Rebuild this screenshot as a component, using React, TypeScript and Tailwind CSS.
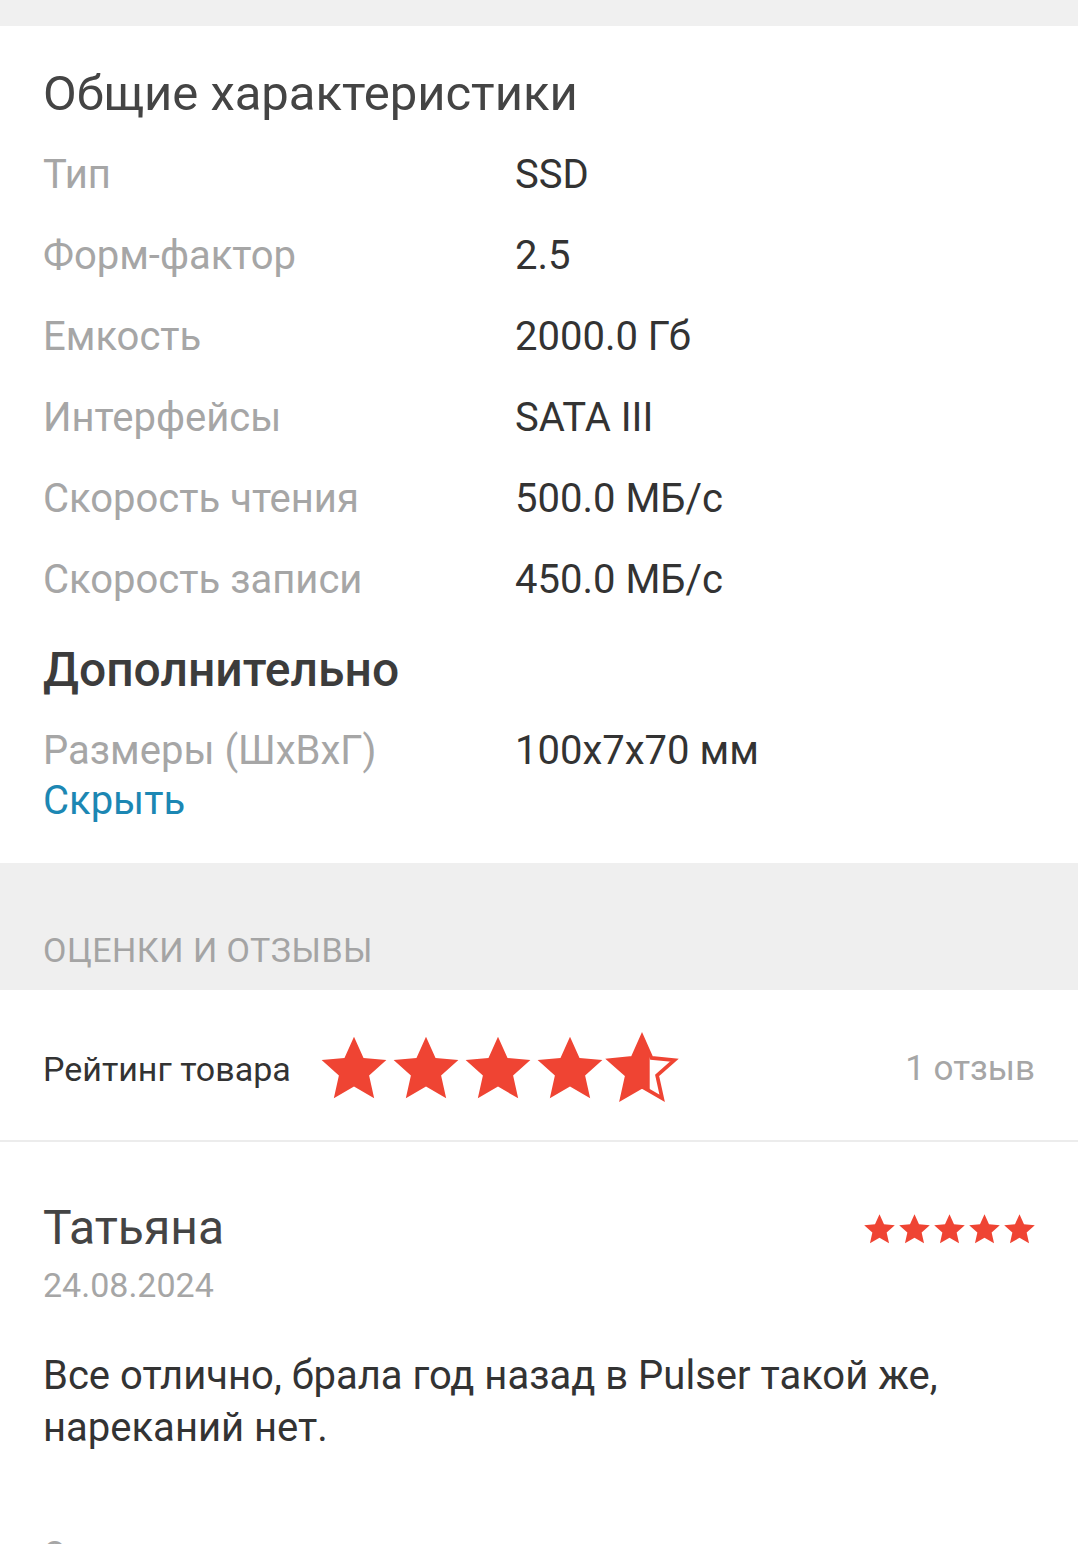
import { ThumbsUp } from "lucide-react"

const specs = [
  ["Тип", "SSD"],
  ["Форм-фактор", "2.5"],
  ["Емкость", "2000.0 Гб"],
  ["Интерфейсы", "SATA III"],
  ["Скорость чтения", "500.0 МБ/с"],
  ["Скорость записи", "450.0 МБ/с"],
]

const StarPath = "M12 1.5l3.09 6.9 7.41.72-5.6 4.98 1.64 7.4L12 17.7l-6.54 3.8 1.64-7.4-5.6-4.98 7.41-.72z"

const Star = ({ size, half = false }: { size: number; half?: boolean }) => (
  <svg width={size} height={size} viewBox="0 0 24 24">
    {half && (
      <defs>
        <clipPath id="half">
          <rect x="0" y="0" width="14.5" height="24" />
        </clipPath>
      </defs>
    )}
    {half ? (
      <>
        <path d={StarPath} fill="none" stroke="#ef4433" strokeWidth="1.2" />
        <path d={StarPath} fill="#ef4433" clipPath="url(#half)" />
      </>
    ) : (
      <path d={StarPath} fill="#ef4433" />
    )}
  </svg>
)

export default function App() {
  return (
    <div className="w-[1078px] h-[1544px] overflow-hidden bg-white font-['Roboto',sans-serif]">
      <div className="h-[26px] bg-[#f0f0f0]" />

      <div className="px-[43px] pt-[40px] pb-[37px]">
        <h2 className="text-[49px] leading-[56px] text-[#444] mb-[12px]">Общие характеристики</h2>
        <div className="flex flex-col">
          {specs.map(([k, v]) => (
            <div key={k} className="flex h-[81px] items-center text-[40px]">
              <div className="w-[472px] text-[#a6a6a6]">{k}</div>
              <div className="text-[#333]">{v}</div>
            </div>
          ))}
        </div>
        <h2 className="mt-[22px] text-[48px] leading-[56px] font-medium text-[#3c3c3c]">Дополнительно</h2>
        <div className="mt-[28px] flex text-[40px] leading-[50px]">
          <div className="w-[472px] text-[#a6a6a6]">Размеры (ШхВхГ)</div>
          <div className="text-[#333]">100x7x70 мм</div>
        </div>
        <div className="text-[40px] leading-[50px] text-[#1c87b3]">Скрыть</div>
      </div>

      <div className="bg-[#efefef] h-[127px] px-[43px] flex items-end pb-[14px]">
        <span className="text-[34px] text-[#a4a4a4] tracking-[0.5px]">ОЦЕНКИ И ОТЗЫВЫ</span>
      </div>

      <div className="h-[152px] pt-[8px] px-[43px] flex items-center border-b-2 border-[#ececec]">
        <span className="text-[34px] text-[#333] mr-[26px]">Рейтинг товара</span>
        <div className="flex -space-x-[2px]">
          <Star size={74} />
          <Star size={74} />
          <Star size={74} />
          <Star size={74} />
          <Star size={74} half />
        </div>
        <span className="ml-auto text-[35px] text-[#a6a6a6]">1 отзыв</span>
      </div>

      <div className="px-[43px] pt-[58px]">
        <div className="flex items-start justify-between">
          <div>
            <div className="text-[48px] leading-[56px] text-[#444]">Татьяна</div>
            <div className="mt-[6px] text-[34px] leading-[46px] text-[#a6a6a6]">24.08.2024</div>
          </div>
          <div className="flex mt-[12px] mr-[-2px]">
            <Star size={35} />
            <Star size={35} />
            <Star size={35} />
            <Star size={35} />
            <Star size={35} />
          </div>
        </div>
        <p className="mt-[42px] text-[40px] leading-[52px] text-[#333]">
          Все отлично, брала год назад в Pulser такой же, нареканий нет.
        </p>
        <div className="mt-[79px] flex items-center text-[34px] leading-[40px] text-[#a6a6a6]">
          <span className="w-[247px]">Отзыв полезен?</span>
          <span>0</span>
          <ThumbsUp className="ml-[40px] w-[48px] h-[48px] text-[#d4d4d4]" strokeWidth={2.5} />
          <span className="ml-[22px] text-[#333]">0</span>
        </div>
      </div>
    </div>
  )
}
